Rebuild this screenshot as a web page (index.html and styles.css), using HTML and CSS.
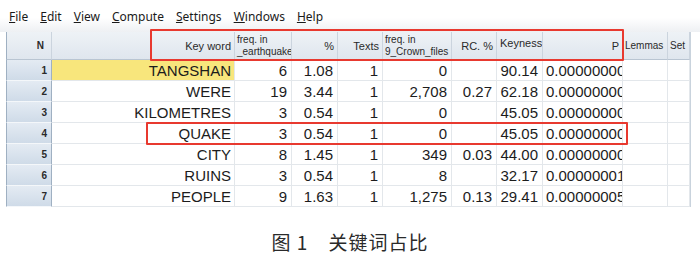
FILE: index.html
```html
<!DOCTYPE html>
<html>
<head>
<meta charset="utf-8">
<link rel="stylesheet" href="styles.css">
</head>
<body>
<div class="menubar">
  <span class="mi"><u>F</u>ile</span>
  <span class="mi"><u>E</u>dit</span>
  <span class="mi"><u>V</u>iew</span>
  <span class="mi"><u>C</u>ompute</span>
  <span class="mi"><u>S</u>ettings</span>
  <span class="mi"><u>W</u>indows</span>
  <span class="mi"><u>H</u>elp</span>
</div>
<div class="tablewrap">
  <div class="grid">
    <div class="hc rh n">N</div>
    <div class="hc r">Key word</div>
    <div class="hc two"><span>freq. in</span><span class="clip">_earthquake</span></div>
    <div class="hc r">%</div>
    <div class="hc r">Texts</div>
    <div class="hc two"><span>freq. in</span><span class="clip">9_Crown_files</span></div>
    <div class="hc r">RC. %</div>
    <div class="hc top">Keyness</div>
    <div class="hc r">P</div>
    <div class="hc l">Lemmas</div>
    <div class="hc l">Set</div>

    <div class="rn">1</div><div class="c kw hl">TANGSHAN</div><div class="c">6</div><div class="c">1.08</div><div class="c">1</div><div class="c">0</div><div class="c"></div><div class="c">90.14</div><div class="c p">0.00000000</div><div class="c"></div><div class="c"></div>
    <div class="rn">2</div><div class="c kw">WERE</div><div class="c">19</div><div class="c">3.44</div><div class="c">1</div><div class="c">2,708</div><div class="c">0.27</div><div class="c">62.18</div><div class="c p">0.00000000</div><div class="c"></div><div class="c"></div>
    <div class="rn">3</div><div class="c kw">KILOMETRES</div><div class="c">3</div><div class="c">0.54</div><div class="c">1</div><div class="c">0</div><div class="c"></div><div class="c">45.05</div><div class="c p">0.00000000</div><div class="c"></div><div class="c"></div>
    <div class="rn">4</div><div class="c kw">QUAKE</div><div class="c">3</div><div class="c">0.54</div><div class="c">1</div><div class="c">0</div><div class="c"></div><div class="c">45.05</div><div class="c p">0.00000000</div><div class="c"></div><div class="c"></div>
    <div class="rn">5</div><div class="c kw">CITY</div><div class="c">8</div><div class="c">1.45</div><div class="c">1</div><div class="c">349</div><div class="c">0.03</div><div class="c">44.00</div><div class="c p">0.00000000</div><div class="c"></div><div class="c"></div>
    <div class="rn">6</div><div class="c kw">RUINS</div><div class="c">3</div><div class="c">0.54</div><div class="c">1</div><div class="c">8</div><div class="c"></div><div class="c">32.17</div><div class="c p">0.00000001</div><div class="c"></div><div class="c"></div>
    <div class="rn">7</div><div class="c kw">PEOPLE</div><div class="c">9</div><div class="c">1.63</div><div class="c">1</div><div class="c">1,275</div><div class="c">0.13</div><div class="c">29.41</div><div class="c p">0.00000005</div><div class="c"></div><div class="c"></div>
  </div>
  <div class="redbox box1"></div>
  <div class="redbox box2"></div>
</div>
<div class="caption">图 1　关键词占比</div>
</body>
</html>
```
FILE: styles.css
```css
html, body {
  margin: 0;
  padding: 0;
  background: #ffffff;
}
body {
  width: 700px;
  height: 261px;
  overflow: hidden;
  font-family: "Liberation Sans", Arial, sans-serif;
}
.menubar {
  height: 32px;
  box-sizing: border-box;
  padding: 8px 0 0 9px;
  display: flex;
  gap: 12px;
  font-family: "Noto Sans", sans-serif;
  font-size: 12px;
  color: #1a1a1a;
  background: linear-gradient(#ffffff 0%, #ffffff 55%, #eef0f3 100%);
}
.mi u {
  text-decoration: underline;
  text-underline-offset: 1px;
}
.tablewrap {
  position: relative;
  padding-left: 6px;
}
.grid {
  display: grid;
  grid-template-columns: 46px 183px 57px 46px 45px 69px 45px 46px 80px 45px 22px;
  grid-template-rows: 28px repeat(7, 21px);
  width: 684px;
  border-right: 1px solid #c9d3dd;
}
.hc {
  background: linear-gradient(#eef2f6, #dfe6ee);
  border-right: 1px solid #cbd4de;
  border-bottom: 1px solid #b9c5d2;
  font-size: 11px;
  color: #2a2a2a;
  display: flex;
  align-items: center;
  padding: 0 3px;
  overflow: hidden;
  white-space: nowrap;
  box-sizing: border-box;
}
.hc.r { justify-content: flex-end; }
.hc.l {
  justify-content: flex-start;
  padding-left: 2px;
  padding-right: 0;
  font-size: 10px;
}
.hc.top { align-items: flex-start; padding-top: 5px; }
.hc.n {
  justify-content: flex-end;
  padding-right: 7px;
  font-weight: bold;
  font-size: 10px;
  border-left: 1px solid #9fb0c2;
}
.hc.two {
  flex-direction: column;
  align-items: flex-start;
  justify-content: center;
  font-size: 10px;
  line-height: 12px;
  padding-left: 2px;
}
.rn {
  background: linear-gradient(#e4ebf3, #cfdbe8);
  border-left: 1px solid #9fb0c2;
  border-right: 1px solid #9fb0c2;
  border-bottom: 1px solid #f4f7fa;
  font-size: 10px;
  font-weight: bold;
  color: #2a2a2a;
  display: flex;
  align-items: center;
  justify-content: flex-end;
  padding-right: 4px;
  box-sizing: border-box;
}
.c {
  border-right: 1px solid #e3e7eb;
  border-bottom: 1px solid #e3e7eb;
  font-size: 15px;
  color: #1c1c1c;
  display: flex;
  align-items: center;
  justify-content: flex-end;
  padding-right: 4px;
  box-sizing: border-box;
  white-space: nowrap;
  overflow: hidden;
}
.c.kw { padding-right: 3px; }
.c.hl { background: #f8e67c; }
.c.p {
  justify-content: flex-start;
  padding-left: 3px;
  padding-right: 0;
}
.redbox {
  position: absolute;
  border: 2px solid #e8392f;
  box-sizing: border-box;
  border-radius: 1px;
}
.box1 {
  left: 150px;
  top: -3px;
  width: 474px;
  height: 32px;
}
.box2 {
  left: 146px;
  top: 90px;
  width: 482px;
  height: 23px;
}
.caption {
  text-align: center;
  font-family: "Noto Sans CJK SC", sans-serif;
  font-size: 19px;
  color: #2a2a2a;
  margin-top: 21px;
  letter-spacing: 1px;
}
```
